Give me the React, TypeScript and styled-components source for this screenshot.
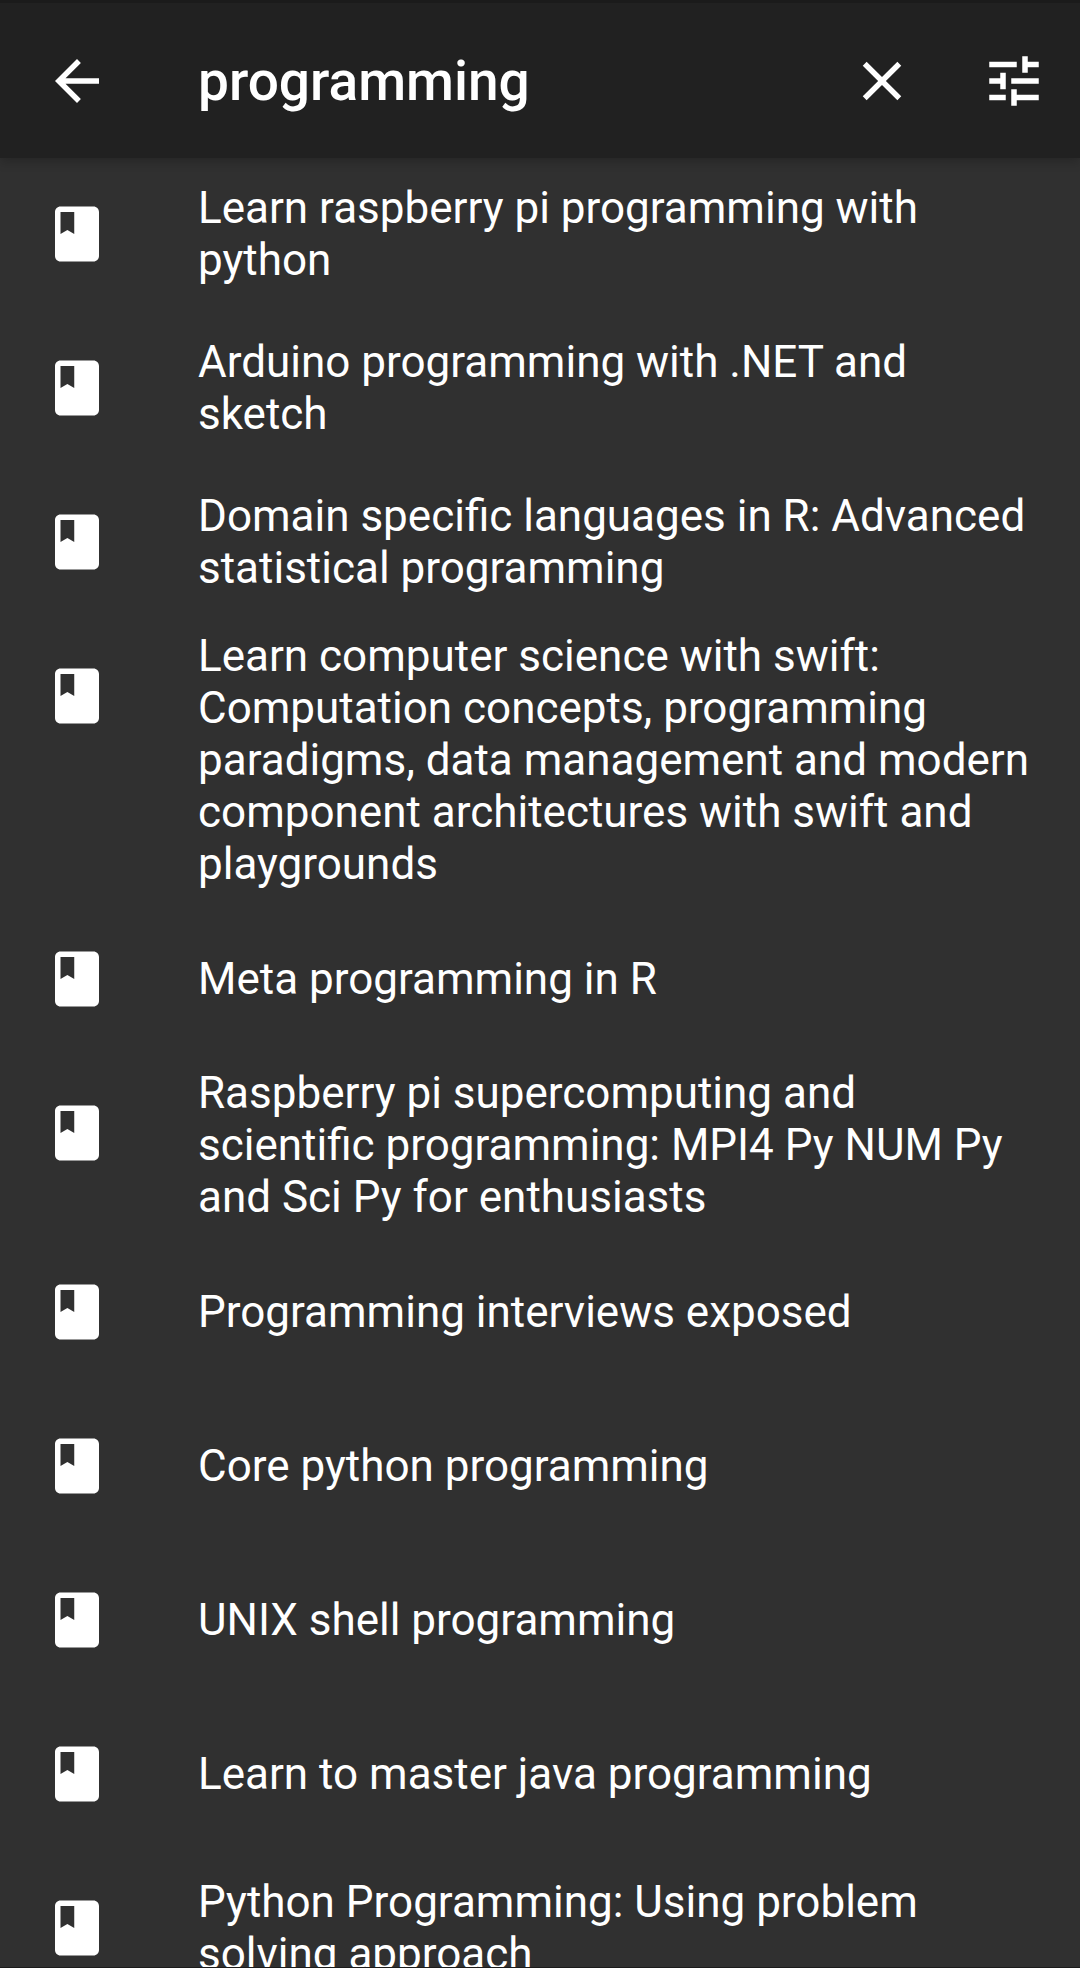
import React, { useState } from "react";
import styled, { createGlobalStyle } from "styled-components";
import { MdArrowBack, MdBook, MdClose, MdTune } from "react-icons/md";

const GlobalStyle = createGlobalStyle`
  *, *::before, *::after { box-sizing: border-box; }
  body {
    margin: 0;
    background: #303030;
    color: #fff;
    font-family: Roboto, "Liberation Sans", sans-serif;
  }
`;

const Screen = styled.div`
  display: flex;
  flex-direction: column;
  height: 100vh;
  border-bottom: 1px solid #1b1b1b;
  background: #303030;
`;

const SearchBar = styled.header`
  position: relative;
  z-index: 1;
  flex: none;
  display: flex;
  align-items: center;
  border-top: 3px solid #1b1b1b;
  background: #212121;
  box-shadow: 0 4px 10px rgba(0, 0, 0, 0.2);
`;

const IconButton = styled.button<{ $width: number }>`
  flex: none;
  display: flex;
  align-items: center;
  justify-content: center;
  width: ${(p) => p.$width}px;
  height: 155px;
  padding: 0;
  border: 0;
  background: none;
  color: #fff;
  font-size: 66px;
  cursor: pointer;
`;

const SearchInput = styled.input`
  flex: 1;
  min-width: 0;
  height: 66px;
  margin: 0 0 0 44px;
  padding: 0;
  border: 0;
  outline: 0;
  background: none;
  color: #fff;
  font-family: inherit;
  font-size: 55px;
  font-weight: 500;
`;

const Results = styled.ul`
  flex: 1;
  min-height: 0;
  margin: 0;
  padding: 0;
  overflow-y: auto;
  scrollbar-width: none;
  list-style: none;
`;

const Row = styled.li`
  display: flex;
  align-items: flex-start;
  gap: 88px;
  min-height: 154px;
  padding: 0 44px;
`;

const BookIcon = styled(MdBook)`
  flex: none;
  margin-top: 43px;
  font-size: 66px;
`;

const Title = styled.span`
  flex: 1;
  align-self: center;
  padding: 10px 0 13px;
  font-size: 44px;
  line-height: 52px;
`;

const books = [
  "Learn raspberry pi programming with python",
  "Arduino programming with .NET and sketch",
  "Domain specific languages in R: Advanced statistical programming",
  "Learn computer science with swift: Computation concepts, programming paradigms, data management and modern component architectures with swift and playgrounds",
  "Meta programming in R",
  "Raspberry pi supercomputing and scientific programming: MPI4 Py NUM Py and Sci Py for enthusiasts",
  "Programming interviews exposed",
  "Core python programming",
  "UNIX shell programming",
  "Learn to master java programming",
  "Python Programming: Using problem solving approach",
];

export default function App() {
  const [query, setQuery] = useState("programming");

  return (
    <Screen>
      <GlobalStyle />
      <SearchBar>
        <IconButton $width={154} type="button" aria-label="Back">
          <MdArrowBack />
        </IconButton>
        <SearchInput
          type="text"
          aria-label="Search books"
          value={query}
          onChange={(e) => setQuery(e.target.value)}
        />
        <IconButton $width={132} type="button" aria-label="Clear" onClick={() => setQuery("")}>
          <MdClose />
        </IconButton>
        <IconButton $width={132} type="button" aria-label="Filters">
          <MdTune />
        </IconButton>
      </SearchBar>
      <Results>
        {books.map((title) => (
          <Row key={title}>
            <BookIcon aria-hidden />
            <Title>{title}</Title>
          </Row>
        ))}
      </Results>
    </Screen>
  );
}
